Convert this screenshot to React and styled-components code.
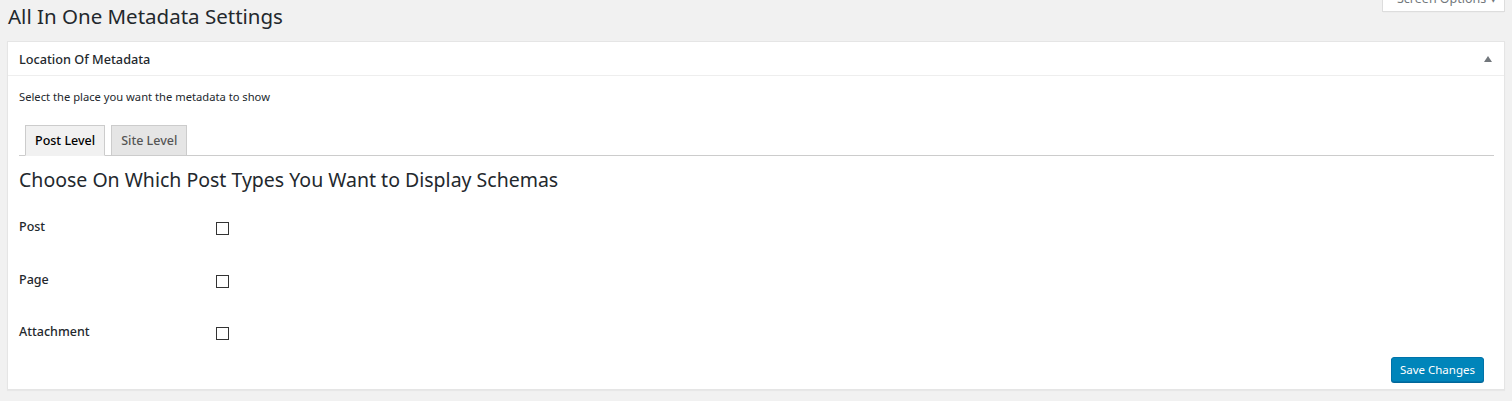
import React, { useState } from "react";
import styled, { createGlobalStyle } from "styled-components";

const GlobalStyle = createGlobalStyle`
  html, body {
    margin: 0;
    padding: 0;
    background: #f1f1f1;
  }
  body {
    font-family: "Noto Sans", "Open Sans", sans-serif;
    color: #23282d;
    font-size: 13px;
  }
`;

const Wrap = styled.div`
  position: relative;
  padding: 0 7px;
  height: 401px;
  box-sizing: border-box;
  overflow: hidden;
`;

const ScreenOptions = styled.button`
  position: absolute;
  top: -17px;
  right: 7px;
  width: 123px;
  height: 29px;
  box-sizing: border-box;
  background: #fff;
  border: 1px solid #ddd;
  border-top: 0;
  box-shadow: 0 1px 1px -1px rgba(0, 0, 0, 0.1);
  color: #72777c;
  font-family: inherit;
  font-size: 12.5px;
  padding: 3px 6px 0 14px;
  text-align: left;
  line-height: 22px;
  white-space: nowrap;
`;

const PageTitle = styled.h1`
  margin: 0;
  padding: 2px 0 0 1px;
  font-size: 20.5px;
  font-weight: 400;
  line-height: 28px;
  height: 41px;
  box-sizing: border-box;
  color: #23282d;
`;

const Postbox = styled.div`
  background: #fff;
  border: 1px solid #e5e5e5;
  box-shadow: 0 1px 1px rgba(0, 0, 0, 0.04);
  display: flex;
  flex-direction: column;
`;

const BoxHeader = styled.div`
  display: flex;
  align-items: center;
  justify-content: space-between;
  flex-shrink: 0;
  height: 33px;
  padding: 0 12px 0 11px;
  border-bottom: 1px solid #eee;
`;

const BoxTitle = styled.h2`
  margin: 0;
  font-size: 12.7px;
  font-weight: 500;
  color: #23282d;
`;

const Toggle = styled.span`
  width: 0;
  height: 0;
  border-left: 4px solid transparent;
  border-right: 4px solid transparent;
  border-bottom: 6px solid #72777c;
  margin-top: 1px;
`;

const Inside = styled.div`
  display: flex;
  flex-direction: column;
  padding: 0 10px 7px 11px;
`;

const Description = styled.p`
  margin: 13px 0 0;
  font-size: 11.2px;
  line-height: 16px;
  color: #23282d;
`;

const TabBar = styled.div`
  display: flex;
  margin-top: 20px;
  padding-left: 6px;
  border-bottom: 1px solid #ccc;
  gap: 6px;
`;

const Tab = styled.a`
  display: block;
  height: 31px;
  box-sizing: border-box;
  padding: 0 9px;
  margin-bottom: -1px;
  border: 1px solid #ccc;
  border-bottom-color: ${(p) => (p.active ? "#f1f1f1" : "#ccc")};
  background: ${(p) => (p.active ? "#f1f1f1" : "#e5e5e5")};
  color: ${(p) => (p.active ? "#000" : "#555")};
  font-size: 12.5px;
  font-weight: 500;
  line-height: 30px;
  cursor: pointer;
`;

const SectionTitle = styled.h2`
  margin: 11px 0 0;
  font-size: 19.5px;
  font-weight: 400;
  line-height: 26px;
  color: #23282d;
`;

const Options = styled.div`
  display: flex;
  flex-direction: column;
  gap: 34.5px;
  margin-top: 25px;
`;

const Row = styled.label`
  display: grid;
  grid-template-columns: 197px 1fr;
  align-items: start;
  height: 18px;
`;

const RowLabel = styled.span`
  font-size: 12.5px;
  font-weight: 500;
  line-height: 18px;
  color: #23282d;
`;

const Check = styled.span`
  display: block;
  width: 13px;
  height: 13px;
  box-sizing: border-box;
  border: 1px solid #333;
  margin-top: 4px;
  background: ${(p) => (p.checked ? "#333" : "#fff")};
`;

const Footer = styled.div`
  display: flex;
  justify-content: flex-end;
  margin-top: 16px;
  padding-right: 10px;
`;

const PrimaryButton = styled.button`
  height: 25px;
  padding: 0 8px;
  background: #0085ba;
  border: 1px solid #0073aa;
  border-radius: 3px;
  box-shadow: 0 1px 0 #006799;
  color: #fff;
  font-family: inherit;
  font-size: 11.5px;
  line-height: 22px;
  cursor: pointer;
`;

const postTypes = ["Post", "Page", "Attachment"];

export default function App() {
  const [tab, setTab] = useState("post");
  const [checked, setChecked] = useState({});

  return (
    <>
      <GlobalStyle />
      <Wrap>
        <ScreenOptions>Screen Options ▾</ScreenOptions>
        <PageTitle>All In One Metadata Settings</PageTitle>
        <Postbox>
          <BoxHeader>
            <BoxTitle>Location Of Metadata</BoxTitle>
            <Toggle />
          </BoxHeader>
          <Inside>
            <Description>Select the place you want the metadata to show</Description>
            <TabBar>
              <Tab active={tab === "post"} onClick={() => setTab("post")}>
                Post Level
              </Tab>
              <Tab active={tab === "site"} onClick={() => setTab("site")}>
                Site Level
              </Tab>
            </TabBar>
            <SectionTitle>Choose On Which Post Types You Want to Display Schemas</SectionTitle>
            <Options>
              {postTypes.map((name) => (
                <Row
                  key={name}
                  onClick={() => setChecked({ ...checked, [name]: !checked[name] })}
                >
                  <RowLabel>{name}</RowLabel>
                  <Check checked={!!checked[name]} />
                </Row>
              ))}
            </Options>
            <Footer>
              <PrimaryButton>Save Changes</PrimaryButton>
            </Footer>
          </Inside>
        </Postbox>
      </Wrap>
    </>
  );
}
